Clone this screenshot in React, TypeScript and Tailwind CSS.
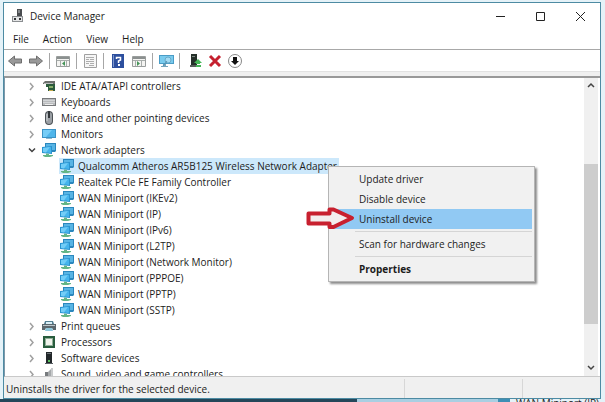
import type { ReactNode } from "react";
import clsx from "clsx";

type IconProps = { children: ReactNode };

function Icon({ children }: IconProps) {
  return (
    <svg className="size-4 shrink-0" viewBox="0 0 16 16" aria-hidden="true">
      {children}
    </svg>
  );
}

function NetworkIcon() {
  return (
    <Icon>
      <path d="M4 1h11v8l-1 1H4z" fill="#2b87bd" />
      <path d="M5 2h9v6H5z" fill="#58b4e4" />
      <path d="M1 5l10-1v8l-10-1z" fill="#2a93cf" />
      <path d="M2 6l8-1v6l-8-1z" fill="#45b4ec" />
      <path d="M2 6l7-1-4 5.400L2 10z" fill="#72cdf7" />
      <path d="M5 11.500l3 .4V13h4v1l-3 1H4l-2-1v-1h3z" fill="#63b586" />
    </Icon>
  );
}

function DriveIcon() {
  return (
    <Icon>
      <path d="M2 5l2-2h10v3H2z" fill="#6d706e" />
      <path d="M3 5h9v1H3z" fill="#bcbfbd" />
      <path d="M5 6h9v7H7V9H5z" fill="#2c5b3d" />
      <path d="M8 8h4v2H8z" fill="#86ad69" />
      <path d="M8 12h4v1H8z" fill="#c5a84c" />
    </Icon>
  );
}

function KeyboardIcon() {
  return (
    <Icon>
      <path d="M1 4h14v8H1z" fill="#77797b" />
      <path d="M2 5h12v6H2z" fill="#b9bbbd" />
      <path d="M2 6.500h12M2 8.500h12" stroke="#d2d4d6" />
      <path d="M4 10.500h8" stroke="#eee" />
    </Icon>
  );
}

function MouseIcon() {
  return (
    <Icon>
      <rect x="4" y="1" width="8" height="14" rx="4" fill="#4d5257" />
      <rect x="5" y="2" width="6" height="12" rx="3" fill="#9a9fa4" />
      <path d="M7 1h2v7H7z" fill="#33373b" />
      <path d="M6 4v7" stroke="#cfd2d4" />
    </Icon>
  );
}

function MonitorIcon() {
  return (
    <Icon>
      <path d="M1 3h14v9H1z" fill="#3b93c6" />
      <path d="M2 4h12v7H2z" fill="#4fb5ea" />
      <path d="M2 4h9l-6 7H2z" fill="#76cdf7" />
      <path d="M5 12h6v1H5z" fill="#8eb9d0" />
    </Icon>
  );
}

function PrinterIcon() {
  return (
    <Icon>
      <path d="M4 3h8l1 3H3z" fill="#547f92" />
      <path d="M5 4h6v2H5z" fill="#d9f0f8" />
      <path d="M1 6h14v6h-3l-1-2H5l-1 2H1z" fill="#5c676d" />
      <path d="M2 7h12v1H2z" fill="#b9c5ca" />
      <path d="M5 10h6l1 3H4z" fill="#8fc9dd" />
    </Icon>
  );
}

function ProcessorIcon() {
  return (
    <Icon>
      <path d="M2 2h12v12H2z" fill="#285c3d" />
      <path d="M4 4h8v8H4z" fill="#8fae96" />
      <path d="M5 5h6v6H5z" fill="#f0f3ec" />
    </Icon>
  );
}

function SoftwareIcon() {
  return (
    <Icon>
      <path d="M5 2h6v11H5z" fill="#22272a" />
      <path d="M6 3h4v1H6z" fill="#6a7175" />
      <path d="M7 10h2v2H7z" fill="#57c25b" />
      <path d="M4 13h8v1H4z" fill="#596064" />
    </Icon>
  );
}

function SpeakerIcon() {
  return (
    <Icon>
      <path d="M4 6h3v8H4z" fill="#777b7e" />
      <path d="M7 6l4-4v13l-4-2z" fill="#a6a9ab" />
      <path d="M10 2h2v13h-2z" fill="#c9cbcc" />
    </Icon>
  );
}

type TreeItem = {
  label: string;
  icon: ReactNode;
  open?: boolean;
  children?: string[];
};

const tree: TreeItem[] = [
  { label: "IDE ATA/ATAPI controllers", icon: <DriveIcon /> },
  { label: "Keyboards", icon: <KeyboardIcon /> },
  { label: "Mice and other pointing devices", icon: <MouseIcon /> },
  { label: "Monitors", icon: <MonitorIcon /> },
  {
    label: "Network adapters",
    icon: <NetworkIcon />,
    open: true,
    children: [
      "Qualcomm Atheros AR5B125 Wireless Network Adapter",
      "Realtek PCIe FE Family Controller",
      "WAN Miniport (IKEv2)",
      "WAN Miniport (IP)",
      "WAN Miniport (IPv6)",
      "WAN Miniport (L2TP)",
      "WAN Miniport (Network Monitor)",
      "WAN Miniport (PPPOE)",
      "WAN Miniport (PPTP)",
      "WAN Miniport (SSTP)",
    ],
  },
  { label: "Print queues", icon: <PrinterIcon /> },
  { label: "Processors", icon: <ProcessorIcon /> },
  { label: "Software devices", icon: <SoftwareIcon /> },
  { label: "Sound, video and game controllers", icon: <SpeakerIcon /> },
];

function TitleBar() {
  return (
    <header className="flex h-[26px] items-center pl-1.5">
      <Icon>
        <path d="M7 1h5v9H7z" fill="#4a4d50" />
        <path d="M8 2h2v3H8z" fill="#85888b" />
        <path d="M2 8h11v6H2z" fill="#8b8e91" />
        <path d="M3 9h9v4H3z" fill="#e4e5e6" />
        <path d="M4 10h2v2H4zM9 10h2v2H9z" fill="#303234" />
      </Icon>
      <h1 className="ml-1 flex-1">Device Manager</h1>
      <button aria-label="Minimize" className="flex w-10 justify-center">
        <svg className="size-3" viewBox="0 0 12 12">
          <path d="M2 6.500h9" stroke="#222" fill="none" />
        </svg>
      </button>
      <button aria-label="Maximize" className="flex w-10 justify-center">
        <svg className="size-3" viewBox="0 0 12 12">
          <path d="M2.500 2.500h8v8h-8z" stroke="#222" fill="none" />
        </svg>
      </button>
      <button aria-label="Close" className="flex w-10 justify-center">
        <svg className="size-3" viewBox="0 0 12 12">
          <path d="M2 2l9 9M11 2l-9 9" stroke="#222" fill="none" />
        </svg>
      </button>
    </header>
  );
}

function MenuBar() {
  return (
    <nav className="flex h-[21px] items-center gap-3.5 border-b border-[#a8a8a8] pl-[9px]">
      <button>File</button>
      <button>Action</button>
      <button>View</button>
      <button>Help</button>
    </nav>
  );
}

function Divider() {
  return <span className="mx-[5px] h-4 w-px bg-[#a6a6a6]" />;
}

function Toolbar() {
  return (
    <div className="flex h-[21px] items-center pl-1">
      <button aria-label="Back">
        <Icon>
          <path d="M.5 8l6-5v3h7v4h-7v3z" fill="#999" stroke="#6e6e6e" />
        </Icon>
      </button>
      <button aria-label="Forward" className="ml-1">
        <Icon>
          <path d="M14.500 8l-6-5v3h-7v4h7v3z" fill="#999" stroke="#6e6e6e" />
        </Icon>
      </button>
      <Divider />
      <button aria-label="Show console tree">
        <Icon>
          <path d="M1.500 3.500h13v10h-13z" fill="#f4f4f2" stroke="#999d9c" />
          <path d="M2 4h12v2H2z" fill="#8b908f" />
          <path d="M5.500 7v6M2 7.500h12M11.500 8v5" stroke="#a8adab" />
          <path d="M10 8v5l-3-2.500z" fill="#459458" />
        </Icon>
      </button>
      <Divider />
      <button aria-label="Properties">
        <Icon>
          <path d="M2.500 1.500h12v13h-12z" fill="#f6f6f6" stroke="#a0a0a0" />
          <path d="M4 4.500h8M4 6.500h3M8 6.500h4M4 8.500h8M4 10.500h3M8 10.500h4M7 12.500h5" stroke="#adadad" />
        </Icon>
      </button>
      <Divider />
      <button aria-label="Help">
        <Icon>
          <path d="M3 1h12v14H3z" fill="#2d4f9e" />
          <path d="M4 2h1v12H4z" fill="#7d97cc" />
          <path d="M7.500 6V4.500h4V7L9.500 8v2" fill="none" stroke="#fff" strokeWidth="1.500" />
          <path d="M9 11h2v2H9z" fill="#fff" />
        </Icon>
      </button>
      <button aria-label="Show action pane" className="ml-1.5">
        <Icon>
          <path d="M1.500 3.500h13v10h-13z" fill="#f4f4f2" stroke="#999d9c" />
          <path d="M2 4h12v2H2z" fill="#8b908f" />
          <path d="M10.500 7v6M2 7.500h12M4.500 8v5" stroke="#a8adab" />
          <path d="M6 8v5l3-2.500z" fill="#459458" />
        </Icon>
      </button>
      <Divider />
      <button aria-label="Scan for hardware changes">
        <Icon>
          <path d="M1 2h15v9H1z" fill="#4a9cc6" />
          <path d="M2 3h13v7H2z" fill="#79cbee" />
          <path d="M5 11h3v2h2v1H3v-1h2z" fill="#75a5bd" />
          <circle cx="10" cy="7" r="3" fill="#a4dcf5" stroke="#69a9c8" />
          <path d="M9 8l-4 5" stroke="#5794b2" />
        </Icon>
      </button>
      <Divider />
      <button aria-label="Update driver" className="ml-0.5">
        <Icon>
          <path d="M4 1h6v11H4z" fill="#25302a" />
          <path d="M5 3h3v1H5z" fill="#7f8c84" />
          <path d="M3 12h8v2H3z" fill="#58605b" />
          <path d="M11 6l4 4h-2v1H9v-1H7zM9 12h5v2H9z" fill="#46b557" />
        </Icon>
      </button>
      <button aria-label="Uninstall device" className="ml-1">
        <Icon>
          <path d="M3 3l10 10M13 3L3 13" stroke="#c5202f" strokeWidth="3" />
        </Icon>
      </button>
      <button aria-label="Disable device" className="ml-1">
        <Icon>
          <circle cx="8" cy="8" r="6.500" fill="#fff" stroke="#888" />
          <path d="M6 4h4v4h2l-4 4-4-4h2z" fill="#111" />
        </Icon>
      </button>
    </div>
  );
}

function Chevron({ open }: { open?: boolean }) {
  return (
    <svg className="size-2.5" viewBox="0 0 10 10" fill="none" aria-hidden="true">
      {open ? (
        <path d="M2 3.500l3 3 3-3" stroke="#404040" strokeWidth="1.500" />
      ) : (
        <path d="M3 2l3 3.500-3 3.500" stroke="#a0a0a0" strokeWidth="1.500" />
      )}
    </svg>
  );
}

function DeviceTree() {
  return (
    <ul className="min-w-0 flex-1 overflow-hidden pl-[22px]">
      {tree.map((item) => (
        <li key={item.label}>
          <div className="flex h-4 items-center whitespace-nowrap">
            <button aria-label={`Toggle ${item.label}`} className="mr-1">
              <Chevron open={item.open} />
            </button>
            {item.icon}
            <span className="ml-1">{item.label}</span>
          </div>
          {item.children && (
            <ul className="pl-8">
              {item.children.map((child, index) => (
                <li key={child} className="flex">
                  <div
                    className={clsx(
                      "flex h-4 items-center whitespace-nowrap pr-0.5",
                      index === 0 && "bg-[#cce8fb]",
                    )}
                  >
                    <NetworkIcon />
                    <span className="ml-[3px]">{child}</span>
                  </div>
                </li>
              ))}
            </ul>
          )}
        </li>
      ))}
    </ul>
  );
}

function ScrollBar() {
  return (
    <div className="mr-0.5 flex w-3.5 flex-col bg-[#f0f0f0]">
      <button aria-label="Scroll up" className="flex h-4 items-center justify-center">
        <svg className="size-2.5" viewBox="0 0 10 10" fill="none">
          <path d="M2 6l3-3 3 3" stroke="#444" strokeWidth="1.500" />
        </svg>
      </button>
      <div className="grow-[70]" />
      <div className="grow-[161] bg-[#cdcdcd]" />
      <div className="grow-[36]" />
      <button aria-label="Scroll down" className="flex h-4 items-center justify-center">
        <svg className="size-2.5" viewBox="0 0 10 10" fill="none">
          <path d="M2 3l3 3 3-3" stroke="#444" strokeWidth="1.500" />
        </svg>
      </button>
    </div>
  );
}

const menuItem = "block h-5 w-full pl-7 text-left";

function ContextMenu() {
  return (
    <div className="absolute top-[166px] left-[328px] w-[207px] border border-[#b5b5b5] bg-[#f1f1f1] p-0.5 shadow-[2px_2px_2px_rgba(0,0,0,0.45)]">
      <button className={menuItem}>Update driver</button>
      <button className={menuItem}>Disable device</button>
      <button className={clsx(menuItem, "bg-[#91c9f3]")}>Uninstall device</button>
      <hr className="my-0.5 ml-6 border-[#d5d5d5]" />
      <button className={menuItem}>Scan for hardware changes</button>
      <hr className="my-0.5 ml-6 border-[#d5d5d5]" />
      <button className={clsx(menuItem, "font-bold")}>Properties</button>
    </div>
  );
}

function App() {
  return (
    <div className="relative flex h-screen flex-col overflow-hidden bg-[#e5f2f8] pt-0.5 font-['Open_Sans','Noto_Sans',sans-serif] text-[10px] leading-4 text-[#1c1c1c]">
      <main className="mr-1 ml-[3px] flex min-h-0 flex-1 flex-col border border-[#4d8ba3] bg-white">
        <TitleBar />
        <MenuBar />
        <Toolbar />
        <div className="h-[5px] border-t border-[#e2e2e2] bg-[#f0f0f0]" />
        <div className="flex min-h-0 flex-1 border-t-2 border-b border-l border-t-[#999] border-b-[#c9c9c9] border-l-[#7d98aa]">
          <DeviceTree />
          <ScrollBar />
        </div>
        <footer className="flex h-[21px] items-center bg-[#f0f0f0] pt-0.5">
          <p className="flex-1 pl-0.5">Uninstalls the driver for the selected device.</p>
          <span className="h-full w-[118px] border-l border-[#d7d7d7]" />
          <span className="h-full w-[78px] border-l border-[#d7d7d7]" />
        </footer>
      </main>
      <div className="flex h-[3px] overflow-hidden">
        <span className="w-[357px] bg-[#24475a]" />
        <span className="w-[141px] bg-[#a9cfe2]" />
        <span className="w-3 bg-[#3d8fb5]" />
        <span className="ml-1.5 flex-1 leading-[8px] whitespace-nowrap">WAN Miniport (IP)</span>
      </div>
      <ContextMenu />
      <svg className="absolute top-[207px] left-[306px] h-[23px] w-[50px]" viewBox="0 0 50 23" aria-hidden="true">
        <path
          d="M2.500 6.500h21V2.500h4L46 11 27.500 20h-4v-3.500h-21z"
          fill="#f3eeee"
          stroke="#c8202f"
          strokeWidth="4"
          strokeLinejoin="round"
        />
      </svg>
    </div>
  );
}

export default App;
